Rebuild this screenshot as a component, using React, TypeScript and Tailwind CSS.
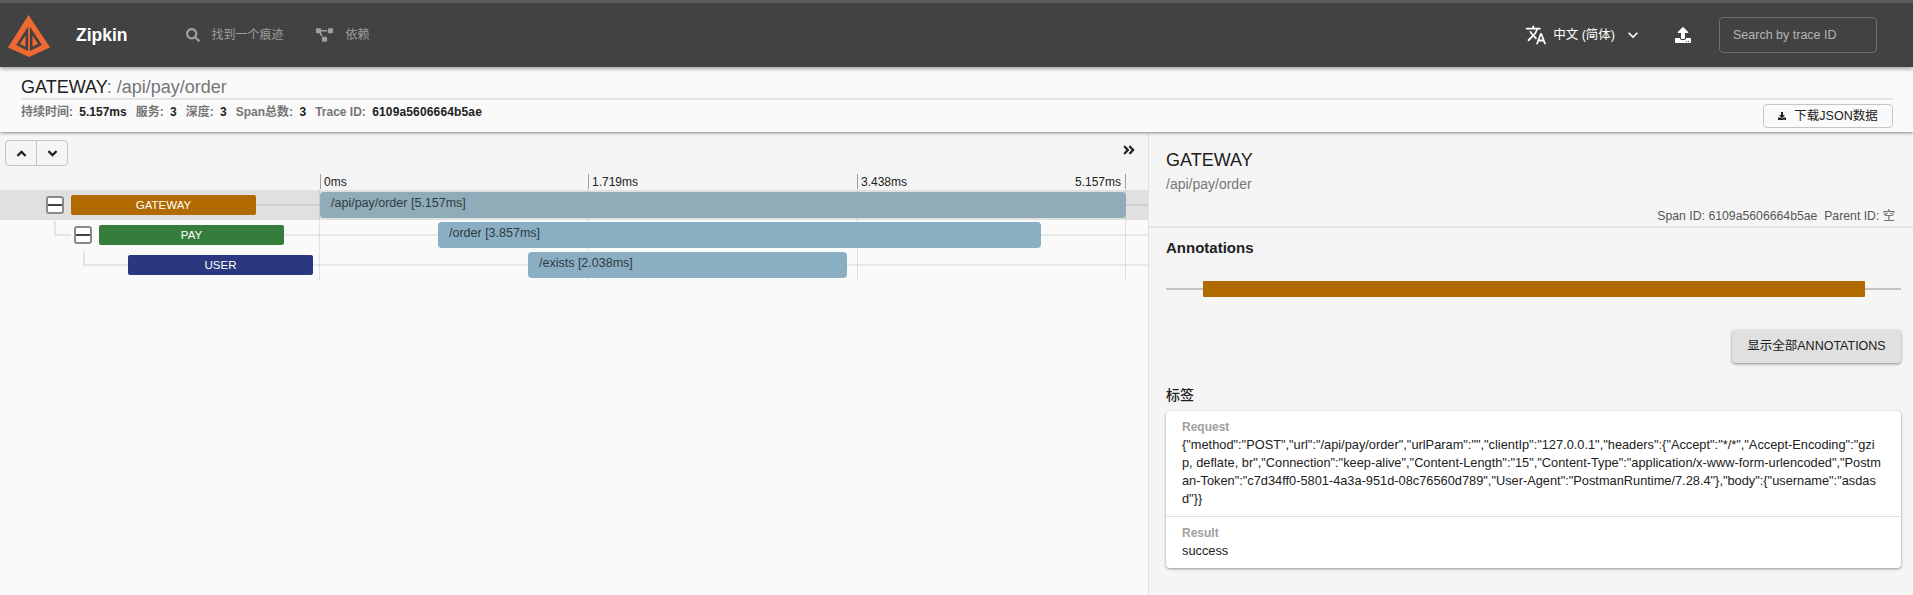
import { FaSearch, FaProjectDiagram, FaAngleUp, FaAngleDown, FaAngleDoubleRight, FaDownload, FaUpload } from 'react-icons/fa';
import { MdTranslate, MdExpandMore } from 'react-icons/md';

const font = "font-['Liberation_Sans','Noto_Sans_CJK_SC',sans-serif]";

const ticks = [
  { label: '0ms', left: 0 },
  { label: '1.719ms', left: 268 },
  { label: '3.438ms', left: 537 },
];

const spans = [
  { service: 'GATEWAY', color: 'bg-[#b16a00]', indent: 71, toggle: true, name: '/api/pay/order [5.157ms]', left: 0, width: 806, selected: true },
  { service: 'PAY', color: 'bg-[#367c3b]', indent: 99, toggle: true, name: '/order [3.857ms]', left: 118, width: 603, selected: false },
  { service: 'USER', color: 'bg-[#2b387f]', indent: 128, toggle: false, name: '/exists [2.038ms]', left: 208, width: 319, selected: false },
];

function Logo() {
  return (
    <svg width="44" height="44" viewBox="0 0 44 44" className="ml-[7px] shrink-0">
      <path d="M21.5 2 L43 34.5 L22 44 L1 34.5 Z" fill="#ee6a32" />
      <path d="M19.8 18 L11 31.5 L19.8 36 Z" fill="none" stroke="#424242" strokeWidth="2.6" />
      <path d="M24.2 18 L33 31.5 L24.2 36 Z" fill="none" stroke="#424242" strokeWidth="2.6" />
    </svg>
  );
}

function Toggle({ left }: { left: number }) {
  return (
    <div
      className="absolute top-[6px] flex h-[18px] w-[18px] items-center rounded-[3px] border-2 border-[#8a8a8a] bg-white"
      style={{ left }}
    >
      <div className="h-[2px] w-full bg-[#424242]" />
    </div>
  );
}

export default function App() {
  return (
    <div className={`${font} flex h-[595px] w-[1913px] flex-col overflow-hidden bg-[#fafafa] text-[#212121]`}>
      {/* App bar */}
      <header className="z-20 flex h-[67px] shrink-0 items-center border-t-[3px] border-t-[#5a5a5a] bg-[#424242] shadow-[0_2px_4px_rgba(0,0,0,0.35)]">
        <Logo />
        <span className="ml-[25px] text-[17.5px] font-bold text-white">Zipkin</span>
        <div className="ml-[58px] flex items-center text-[12px] text-[#9e9e9e]">
          <FaSearch className="h-[14px] w-[14px]" />
          <span className="ml-[12px]">找到一个痕迹</span>
          <FaProjectDiagram className="ml-[32px] h-[16px] w-[17px]" />
          <span className="ml-[13px]">依赖</span>
        </div>
        <div className="ml-auto flex items-center text-white">
          <MdTranslate className="h-[22px] w-[22px]" />
          <span className="ml-[6px] text-[12.5px]">中文 (简体)</span>
          <MdExpandMore className="ml-[8px] h-[20px] w-[20px]" />
          <FaUpload className="ml-[32px] h-[16px] w-[16px]" />
          <div className="mr-[36px] ml-[28px] flex h-[36px] w-[158px] items-center rounded border border-[#6e6e6e] pl-[13px] text-[12.5px] text-[#b5b5b5]">
            Search by trace ID
          </div>
        </div>
      </header>

      {/* Trace summary */}
      <section className="z-10 h-[65px] shrink-0 bg-[#fafafa] pr-[20px] pl-[21px] shadow-[0_1px_3px_rgba(0,0,0,0.45)]">
        <div className="h-[33px] border-b-2 border-[#e4e4e4] pt-[10px] text-[18px] leading-[20px]">
          GATEWAY<span className="text-[#757575]">: /api/pay/order</span>
        </div>
        <div className="flex items-start justify-between">
          <div className="mt-[5px] flex gap-[9px] text-[12px] leading-[14px] font-bold text-[#757575]">
            <span>持续时间: <span className="ml-[3px] text-[#212121]">5.157ms</span></span>
            <span>服务: <span className="ml-[3px] text-[#212121]">3</span></span>
            <span>深度: <span className="ml-[3px] text-[#212121]">3</span></span>
            <span>Span总数: <span className="ml-[3px] text-[#212121]">3</span></span>
            <span>Trace ID: <span className="ml-[3px] tracking-[0.15px] text-[#212121]">6109a5606664b5ae</span></span>
          </div>
          <button className="mt-[4px] flex h-[24px] w-[130px] items-center justify-center rounded border border-[#c4c4c4] text-[12.5px] text-[#212121]">
            <FaDownload className="mr-[8px] h-[8px] w-[8px]" />
            下载JSON数据
          </button>
        </div>
      </section>

      <main className="flex min-h-0 flex-1">
        {/* Timeline */}
        <section className="relative w-[1149px] shrink-0 border-r border-[#e0e0e0]">
          <div className="h-[42px] bg-[#f5f5f5] pt-[8px] pl-[5px]">
            <div className="flex h-[26px] w-[63px] rounded border border-[#c4c4c4] text-[#212121]">
              <div className="flex flex-1 items-center justify-center border-r border-[#c4c4c4]">
                <FaAngleUp className="h-[15px] w-[15px]" />
              </div>
              <div className="flex flex-1 items-center justify-center">
                <FaAngleDown className="h-[15px] w-[15px]" />
              </div>
            </div>
          </div>
          <FaAngleDoubleRight className="absolute top-[11px] left-[1122px] h-[14px] w-[14px] text-[#212121]" />

          <div className="h-[16px] bg-[#f5f5f5]">
            <div className="relative ml-[320px] h-full text-[12px] leading-[16px]">
              {ticks.map((t) => (
                <span key={t.label} className="absolute top-0 h-[15px] border-l border-[#9e9e9e] pl-[3px]" style={{ left: t.left }}>
                  {t.label}
                </span>
              ))}
              <span className="absolute top-0 right-[22px] h-[15px] border-r border-[#9e9e9e] pr-[4px]">5.157ms</span>
            </div>
          </div>

          <div className="relative">
            {spans.map((s) => (
              <div key={s.service} className={`relative flex h-[30px] ${s.selected ? 'bg-[#e0e0e0]' : ''}`}>
                <div className="absolute top-[14px] right-0 h-[2px] bg-[#00000012]" style={{ left: s.indent + 184 }} />
                {s.toggle && <Toggle left={s.indent - 25} />}
                <div
                  className={`absolute top-[5px] flex h-[20px] w-[185px] items-center justify-center rounded-[2px] pt-px text-[11.5px] text-white ${s.color}`}
                  style={{ left: s.indent }}
                >
                  {s.service}
                </div>
                <div
                  className={`absolute top-[2px] z-10 h-[26px] rounded-[4px] pt-[3px] pl-[11px] text-[12.5px] leading-[16px] text-[#2f3b42] ${s.selected ? 'bg-[#90acb8]' : 'bg-[#8aaec2]'}`}
                  style={{ left: 320 + s.left, width: s.width }}
                >
                  {s.name}
                </div>
              </div>
            ))}
            {/* Tree connectors */}
            <div className="absolute top-[31px] left-[54px] h-[15px] w-[17px] border-b-2 border-l-2 border-[#e4e4e4]" />
            <div className="absolute top-[61px] left-[83px] h-[15px] w-[45px] border-b-2 border-l-2 border-[#e4e4e4]" />
            {/* Time grid */}
            {[319, 588, 857, 1125].map((x) => (
              <div key={x} className="absolute top-0 h-[90px] w-px bg-[#00000018]" style={{ left: x }} />
            ))}
          </div>
        </section>

        {/* Span detail */}
        <aside className="min-w-0 flex-1 bg-[#f5f5f5]">
          <div className="h-[96px] border-b-2 border-[#e4e4e4]">
            <div className="pt-[18px] pl-[17px] text-[18px] leading-[20px]">GATEWAY</div>
            <div className="mt-[5px] pl-[17px] text-[14px] leading-[18px] text-[#757575]">/api/pay/order</div>
            <div className="mt-[16px] pr-[18px] text-right text-[12.25px] leading-[14px] text-[#555]">
              Span ID: 6109a5606664b5ae&nbsp;&nbsp;Parent ID: 空
            </div>
          </div>
          <div className="pr-[12px] pl-[17px]">
            <div className="mt-[11px] text-[15px] leading-[18px] font-bold">Annotations</div>
            <div className="relative mt-[24px] h-[16px]">
              <div className="absolute top-[7px] right-0 left-0 h-[2px] bg-[#c4c4c4]" />
              <div className="absolute top-0 left-[37px] h-[16px] w-[662px] rounded-[1px] bg-[#b16a00]" />
            </div>
            <div className="mt-[33px] flex justify-end">
              <button className="h-[33px] w-[169px] rounded bg-[#e0e0e0] text-[12.5px] text-[#212121] shadow-[0_1px_3px_rgba(0,0,0,0.45)]">
                显示全部ANNOTATIONS
              </button>
            </div>
            <div className="mt-[23px] text-[14px] leading-[18px] font-medium">标签</div>
            <div className="mt-[7px] rounded bg-white text-[12.8px] leading-[18px] shadow-[0_1px_3px_rgba(0,0,0,0.4)]">
              <div className="border-b border-[#e0e0e0] px-[16px] pt-[7px] pb-[8px]">
                <div className="text-[12px] font-bold text-[#a0a0a0]">Request</div>
                <div className="break-all">
                  {'{"method":"POST","url":"/api/pay/order","urlParam":"","clientIp":"127.0.0.1","headers":{"Accept":"*/*","Accept-Encoding":"gzip, deflate, br","Connection":"keep-alive","Content-Length":"15","Content-Type":"application/x-www-form-urlencoded","Postman-Token":"c7d34ff0-5801-4a3a-951d-08c76560d789","User-Agent":"PostmanRuntime/7.28.4"},"body":{"username":"asdasd"}}'}
                </div>
              </div>
              <div className="px-[16px] pt-[7px] pb-[8px]">
                <div className="text-[12px] font-bold text-[#a0a0a0]">Result</div>
                <div>success</div>
              </div>
            </div>
          </div>
        </aside>
      </main>
    </div>
  );
}
